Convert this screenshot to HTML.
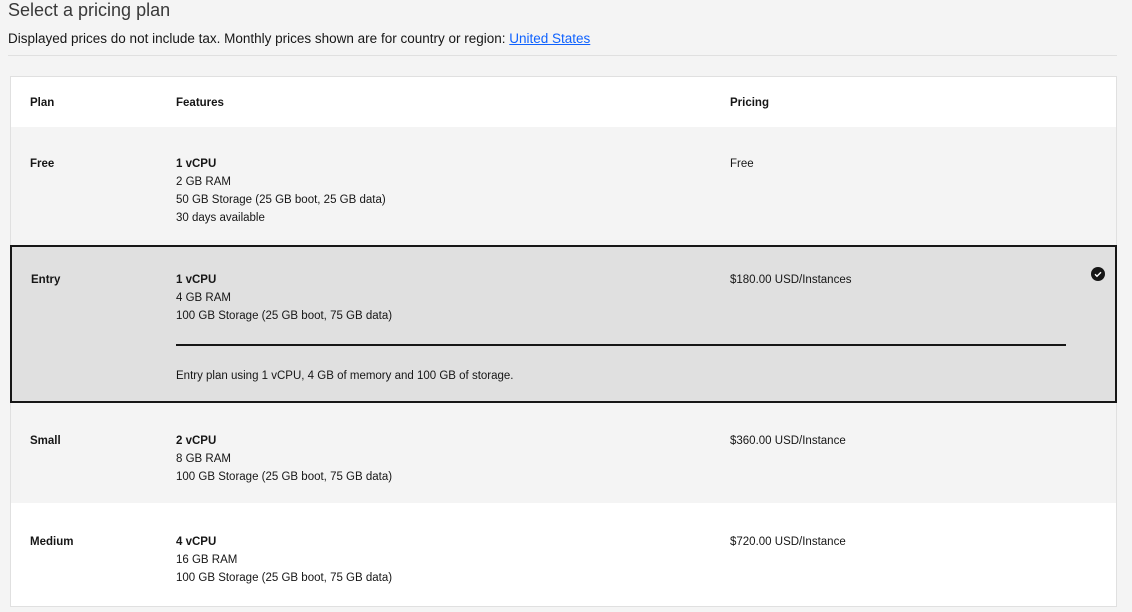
<!DOCTYPE html>
<html><head><style>
body{margin:0;width:1132px;height:612px;background:#f4f4f4;font-family:"Liberation Sans",sans-serif;color:#161616;overflow:hidden;position:relative}
.a{position:absolute}
h1{position:absolute;left:8px;top:0px;margin:0;font-size:18px;font-weight:300;color:#393939}
.sub{left:8px;top:31px;font-size:13.5px}
.sub a{color:#0f62fe;text-decoration:underline}
.hr{left:8px;top:55px;width:1109px;height:1px;background:#e0e0e0}
.tbl{left:10px;top:76px;width:1105px;height:529px;border:1px solid #e0e0e0}
.row{position:absolute;left:0;width:1105px;font-size:11.5px;line-height:18px}
.row div{position:absolute}
.c1{left:19px}.c2{left:165px}.c3{left:719px}
b{font-weight:bold}
</style></head><body>
<h1>Select a pricing plan</h1>
<div class="a sub">Displayed prices do not include tax. Monthly prices shown are for country or region: <a>United States</a></div>
<div class="a hr"></div>
<div class="a tbl">
 <div class="row" style="top:0;height:50px;background:#fff">
  <div class="c1" style="top:17px"><b>Plan</b></div><div class="c2" style="top:17px"><b>Features</b></div><div class="c3" style="top:17px"><b>Pricing</b></div>
 </div>
 <div class="row" style="top:50px;height:119px;background:#f4f4f4">
  <div class="c1" style="top:28px"><b>Free</b></div>
  <div class="c2" style="top:28px"><b>1 vCPU</b><br>2 GB RAM<br>50 GB Storage (25 GB boot, 25 GB data)<br>30 days available</div>
  <div class="c3" style="top:28px">Free</div>
 </div>
 <div class="row" style="top:168px;left:-1px;width:1103px;height:154px;background:#e0e0e0;border:2px solid #161616">
  <div class="c1" style="top:24px"><b>Entry</b></div>
  <div class="c2" style="top:24px;left:164px"><b>1 vCPU</b><br>4 GB RAM<br>100 GB Storage (25 GB boot, 75 GB data)</div>
  <div class="c3" style="top:24px;left:718px">$180.00 USD/Instances</div>
  <div style="left:164px;top:97px;width:890px;height:2px;background:#161616"></div>
  <div class="c2" style="top:120px;left:164px">Entry plan using 1 vCPU, 4 GB of memory and 100 GB of storage.</div>
  <div style="left:1079px;top:20px;width:14px;height:14px;border-radius:50%;background:#161616">
   <svg width="14" height="14" viewBox="0 0 14 14"><path d="M4 7.2l2 2 4-4" stroke="#fff" stroke-width="1.4" fill="none"/></svg></div>
 </div>
 <div class="row" style="top:326px;height:100px;background:#f4f4f4">
  <div class="c1" style="top:29px"><b>Small</b></div>
  <div class="c2" style="top:29px"><b>2 vCPU</b><br>8 GB RAM<br>100 GB Storage (25 GB boot, 75 GB data)</div>
  <div class="c3" style="top:29px">$360.00 USD/Instance</div>
 </div>
 <div class="row" style="top:426px;height:103px;background:#fff">
  <div class="c1" style="top:30px"><b>Medium</b></div>
  <div class="c2" style="top:30px"><b>4 vCPU</b><br>16 GB RAM<br>100 GB Storage (25 GB boot, 75 GB data)</div>
  <div class="c3" style="top:30px">$720.00 USD/Instance</div>
 </div>
</div>
</body></html>
